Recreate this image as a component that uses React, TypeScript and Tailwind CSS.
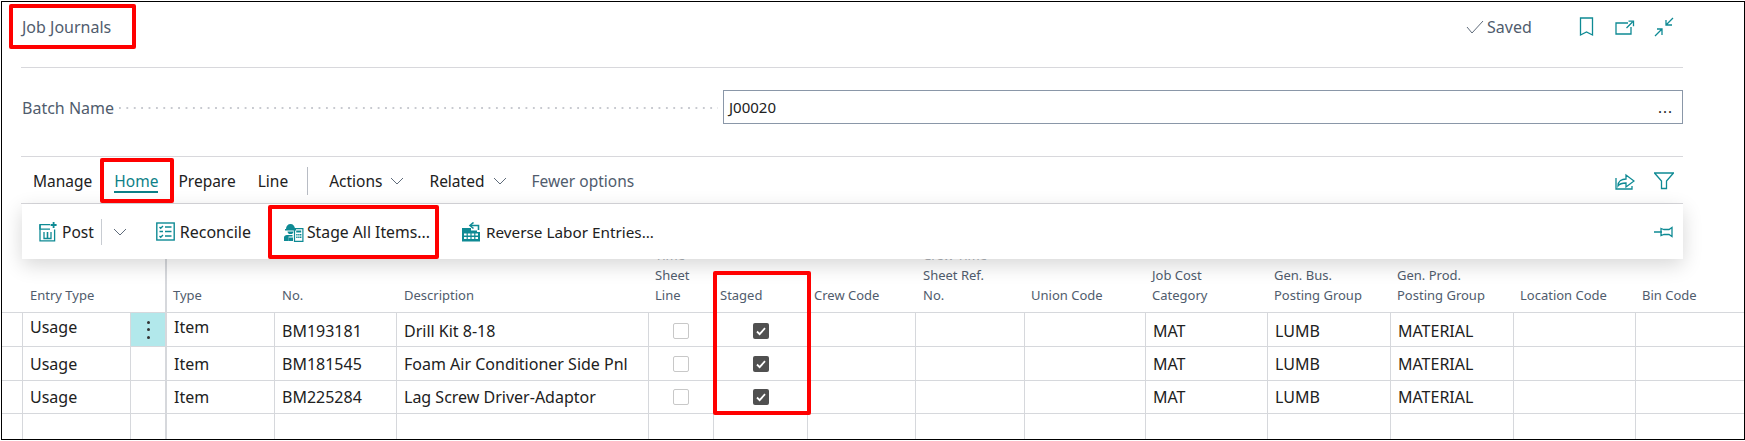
import React from "react";

const F = { fontFamily: '"Noto Sans", "Open Sans", sans-serif' };
const T = "#0e8a94";

const cols = "grid-cols-[20px_108px_35px_109px_122px_252px_65px_94px_108px_109px_121px_122px_123px_123px_122px_1fr]";

function Chevron() {
  return (
    <svg width="14" height="8" viewBox="0 0 14 8" fill="none" stroke="#5f6b7a" strokeWidth="1">
      <path d="M1 1l6 6 6-6" />
    </svg>
  );
}

function Check({ on }: { on: boolean }) {
  if (on) {
    return (
      <div className="w-4 h-4 rounded-[2px] bg-[#505050] flex items-center justify-center">
        <svg width="12" height="12" viewBox="0 0 12 12" fill="none" stroke="#fff" strokeWidth="1.8">
          <path d="M2 6.5l2.6 2.6L10 3.2" />
        </svg>
      </div>
    );
  }
  return <div className="w-4 h-4 rounded-[2px] border-[1.5px] border-[#c8c8c8] bg-white" />;
}

function PostIcon() {
  return (
    <svg width="18" height="20" viewBox="0 0 18 20" fill="none" stroke={T} strokeWidth="1.3">
      <path d="M11 2.6H1v16.2h14.6V7.5" />
      <path d="M1 2.6v4.6h10" />
      <path d="M5 10v6.5h7V10" strokeWidth="1.3" />
      <path d="M8.5 10v6.5" strokeWidth="1.6" />
      <path d="M14.6 0v6M11.6 3h6" strokeWidth="1.8" />
    </svg>
  );
}

function ReconcileIcon() {
  return (
    <svg width="19" height="19" viewBox="0 0 19 19" fill="none" stroke={T} strokeWidth="1.4">
      <rect x="0.8" y="1" width="17.4" height="17" />
      <path d="M9 5h6.5M9 9.5h6.5M9 14h6.5" />
      <path d="M3.5 5l1.2 1.2L7 4M3.5 14l1.2 1.2L7 13M3.5 9.5H7" />
    </svg>
  );
}

function StageIcon() {
  return (
    <svg width="21" height="20" viewBox="0 0 21 20" fill={T}>
      <path d="M3 7c0-3 2-5 4.5-5S12 4 12 7h1v1.4H2V7z" />
      <path d="M4.5 9.5h6c0 1.6-1.3 2.6-3 2.6s-3-1-3-2.6z" />
      <path d="M1 19v-3.5c0-1.6 1.4-2.6 3-2.6h5.5v1.6H5.6v4.5z" />
      <rect x="5.5" y="15.5" width="4.5" height="3.5" />
      <path fill="none" stroke={T} strokeWidth="1.2" d="M11.5 6.6h8.4V19.4h-8.4z" />
      <path d="M13.2 8.6h5v2h-5zM13.2 12h1.4v1.4h-1.4zM15.2 12h1.4v1.4h-1.4zM17 12h1.4v1.4H17zM13.2 14.6h1.4V16h-1.4zM15.2 14.6h1.4V16h-1.4zM17 14.6h1.4V16H17z" />
    </svg>
  );
}

function ReverseIcon() {
  return (
    <svg width="20" height="20" viewBox="0 0 20 20" fill="none">
      <path d="M1 6h9v2.5h6V10h3v9.5H1z" fill={T} />
      <path
        d="M3 11.5h2.6v2H3zM6.8 11.5h2.6v2H6.8zM10.6 11.5h2.6v2h-2.6zM14.4 11.5H17v2h-2.6zM3 15h2.6v2H3zM6.8 15h2.6v2H6.8zM10.6 15h2.6v2h-2.6zM14.4 15H17v2h-2.6z"
        fill="#fff"
      />
      <path d="M17.5 6.5V3.8H11" stroke="#fff" strokeWidth="3.6" />
      <path d="M17.5 8V3.5H10" stroke={T} strokeWidth="1.6" />
      <path d="M12.5 0.5L9 3.5l3.5 3" stroke={T} strokeWidth="1.6" />
    </svg>
  );
}

function H({ children, x = "pl-[7px]" }: { children?: React.ReactNode; x?: string }) {
  return (
    <div className={`pb-[7px] flex flex-col justify-end text-[13px] leading-[20px] text-[#505c6d] whitespace-nowrap ${x}`}>
      {children}
    </div>
  );
}

type CellProps = {
  children?: React.ReactNode;
  h: string;
  left?: string;
  bottom?: string;
  pad?: string;
  x?: string;
};

function C({ children, h, left = "border-l", bottom = "border-b", pad = "pl-[7px]", x = "" }: CellProps) {
  return (
    <div
      className={`flex items-center border-[#d6d8dc] text-[16px] leading-[24px] text-[#212121] whitespace-nowrap overflow-hidden ${h} ${left} ${bottom} ${pad} ${x}`}
    >
      {children}
    </div>
  );
}

const rows = [
  { no: "BM193181", d: "Drill Kit 8-18", first: true, h: "h-[34px]" },
  { no: "BM181545", d: "Foam Air Conditioner Side Pnl", first: false, h: "h-[34px]" },
  { no: "BM225284", d: "Lag Screw Driver-Adaptor", first: false, h: "h-[33px]" },
];

const blanks = Array.from({ length: 12 }, (_, i) => i);

export default function App() {
  return (
    <div className="relative w-[1744px] h-[439px] ml-px mt-px border border-black bg-white overflow-hidden" style={F}>
      {/* Page header */}
      <div className="ml-[19px] w-[1662px]">
        <div className="h-[66px] border-b border-[#d8d8dc] flex items-start justify-between">
          <div className="pt-[13px] pl-px text-[16px] leading-[24px] text-[#505c6d]">Job Journals</div>
          <div className="flex items-center h-[50px] text-[#505c6d]">
            <svg width="18" height="14" viewBox="0 0 18 14" fill="none" stroke="#5f6b7a" strokeWidth="1" className="mr-[3px]">
              <path d="M1 7l5 6L17 1" />
            </svg>
            <span className="text-[16px] leading-[24px] w-[44px] whitespace-nowrap">Saved</span>
            <svg width="15" height="20" viewBox="0 0 15 20" fill="none" stroke={T} strokeWidth="1.3" className="ml-[48px]">
              <path d="M1.5 1h12v17l-6-3-6 3z" />
            </svg>
            <svg width="20" height="15" viewBox="0 0 20 15" fill="none" stroke={T} strokeWidth="1.3" className="ml-[21px]">
              <path d="M13 3H1v11h15V7" />
              <path d="M11.5 8l6-6M13.5 1.2h5v5" strokeWidth="1.3" />
            </svg>
            <svg width="20" height="20" viewBox="0 0 20 20" fill="none" stroke={T} strokeWidth="1.3" className="ml-[19px] mr-[9px]">
              <path d="M19 1l-7 7M12 3v5h6M1 19l7-7M3 12h5v6" />
            </svg>
          </div>
        </div>
        {/* Batch */}
        <div className="flex items-center h-[89px] pb-[11px] border-b border-[#d8d8dc]">
          <span className="ml-px mt-[3px] text-[16px] leading-[20px] text-[#505c6d] shrink-0">Batch Name</span>
          <div className="flex-1 mx-[5px] mt-[3px] h-[2px] bg-[linear-gradient(to_right,#c8cad0_2px,transparent_2px)] bg-[length:7.4px_2px]" />
          <div className="w-[960px] h-[34px] border border-[#8a97a8] flex items-center justify-between pl-[5px] pr-[9px] pt-[2px] text-[15px] text-[#212121]">
            <span>J00020</span>
            <span className="tracking-[1px] leading-[14px] pb-[2px]">...</span>
          </div>
        </div>
        {/* Tabs */}
        <div className="flex items-center h-[47px] pt-[2px] text-[15.5px] leading-[24px] text-[#212121] pl-[12px] border-b border-[#d8d8dc]">
          <span>Manage</span>
          <span className="relative ml-[22px] text-[#0d7f87]">
            Home
            <span className="absolute left-0 right-0 top-[22px] h-[2px] bg-[#0d7f87]" />
          </span>
          <span className="ml-[20px]">Prepare</span>
          <span className="ml-[22px]">Line</span>
          <span className="ml-[19px] w-px h-[28px] bg-[#b8bcc4]" />
          <span className="ml-[21px]">Actions</span>
          <span className="ml-[8px]"><Chevron /></span>
          <span className="ml-[25px]">Related</span>
          <span className="ml-[9px]"><Chevron /></span>
          <span className="ml-[24px] text-[#505c6d]">Fewer options</span>
          <div className="ml-auto flex items-center mr-[9px]">
            <svg width="20" height="17" viewBox="0 0 20 17" fill="none" stroke={T} strokeWidth="1.3">
              <path d="M1 5v11h16v-3" />
              <path d="M3 13c0-5 4-7 8-7V2l8 6-8 6v-4c-3 0-6 0-8 3z" />
            </svg>
            <svg width="20" height="18" viewBox="0 0 20 18" fill="none" stroke={T} strokeWidth="1.3" className="ml-[19px]">
              <path d="M0.5 1h19L12.5 9v7.5h-5V9z" />
            </svg>
          </div>
        </div>
        {/* Action bar */}
        <div className="relative z-10 h-[55px] ml-[1px] bg-white flex items-center pl-[17px] text-[16px] leading-[24px] text-[#212121] shadow-[0_6px_20px_rgba(0,0,0,0.16)]">
          <PostIcon />
          <span className="ml-[5px] text-[15.5px]">Post</span>
          <span className="ml-[7px] w-px h-[26px] bg-[#c8ccd2]" />
          <span className="ml-[11px]"><Chevron /></span>
          <span className="ml-[29px]"><ReconcileIcon /></span>
          <span className="ml-[5px]">Reconcile</span>
          <span className="ml-[32px]"><StageIcon /></span>
          <span className="ml-[3px] text-[15.75px]">Stage All Items...</span>
          <span className="ml-[31px]"><ReverseIcon /></span>
          <span className="ml-[5px] text-[15.3px]">Reverse Labor Entries...</span>
          <svg width="20" height="12" viewBox="0 0 20 12" fill="none" stroke={T} strokeWidth="1.3" className="ml-auto mr-[9px]">
            <path d="M0 6h8M7 2.5l3 1h5l3-2v9l-3-2h-5l-3 1z" />
          </svg>
        </div>
      </div>
      {/* Table */}
      <div className={`grid ${cols} -mt-[14px]`}>
        <H />
        <H x="col-span-2 pl-[8px]">Entry Type</H>
        <H x="border-l-2 border-[#d6d8dc] pl-[6px]">Type</H>
        <H x="pl-[8px]">No.</H>
        <H x="pl-[8px]">Description</H>
        <H>
          <span className="text-[#b0b4ba]">Time</span>
          <span>Sheet</span>
          <span>Line</span>
        </H>
        <H>Staged</H>
        <H>Crew Code</H>
        <H x="pl-[8px]">
          <span className="text-[#b0b4ba]">Crew Time</span>
          <span>Sheet Ref.</span>
          <span>No.</span>
        </H>
        <H>Union Code</H>
        <H>
          <span>Job Cost</span>
          <span>Category</span>
        </H>
        <H>
          <span>Gen. Bus.</span>
          <span>Posting Group</span>
        </H>
        <H>
          <span>Gen. Prod.</span>
          <span>Posting Group</span>
        </H>
        <H>Location Code</H>
        <H>Bin Code</H>
        <div className="col-span-16 h-px bg-[#d6d8dc]" />
        {rows.map((r) => {
          const up = r.first ? "pb-[6px]" : "";
          const down = r.first ? "pt-[3px]" : "";
          return (
            <React.Fragment key={r.no}>
              <C h={r.h} left="" />
              <C h={r.h} x={up}>Usage</C>
              <C h={r.h} pad="" x={`justify-center ${r.first ? "bg-[#b2e8eb]" : ""}`}>
                {r.first && (
                  <div className="flex flex-col gap-[4.5px]">
                    <span className="block w-[3px] h-[3px] rounded-full bg-[#333]" />
                    <span className="block w-[3px] h-[3px] rounded-full bg-[#333]" />
                    <span className="block w-[3px] h-[3px] rounded-full bg-[#333]" />
                  </div>
                )}
              </C>
              <C h={r.h} left="border-l-2" x={up}>Item</C>
              <C h={r.h} x={down}>{r.no}</C>
              <C h={r.h} x={down}>{r.d}</C>
              <C h={r.h} pad="" x={`justify-center ${down}`}><Check on={false} /></C>
              <C h={r.h} pad="" x={`justify-center ${down}`}><Check on={true} /></C>
              <C h={r.h} />
              <C h={r.h} />
              <C h={r.h} />
              <C h={r.h} x={down}>MAT</C>
              <C h={r.h} x={down}>LUMB</C>
              <C h={r.h} x={down}>MATERIAL</C>
              <C h={r.h} />
              <C h={r.h} />
            </React.Fragment>
          );
        })}
        <C h="h-[26px]" left="" bottom="" />
        <C h="h-[26px]" bottom="" />
        <C h="h-[26px]" bottom="" />
        <C h="h-[26px]" left="border-l-2" bottom="" />
        {blanks.map((i) => (
          <C key={i} h="h-[26px]" bottom="" />
        ))}
      </div>
      {/* Red annotation boxes */}
      <div className="absolute z-20 left-[7px] top-[2px] w-[127px] h-[45px] border-[4px] border-[#ff0000] rounded-[2px]" />
      <div className="absolute z-20 left-[98px] top-[156px] w-[74px] h-[45px] border-[4px] border-[#ff0000] rounded-[2px]" />
      <div className="absolute z-20 left-[266px] top-[203px] w-[171px] h-[54px] border-[4px] border-[#ff0000] rounded-[2px]" />
      <div className="absolute z-20 left-[711px] top-[269px] w-[98px] h-[144px] border-[4px] border-[#ff0000] rounded-[2px]" />
    </div>
  );
}
